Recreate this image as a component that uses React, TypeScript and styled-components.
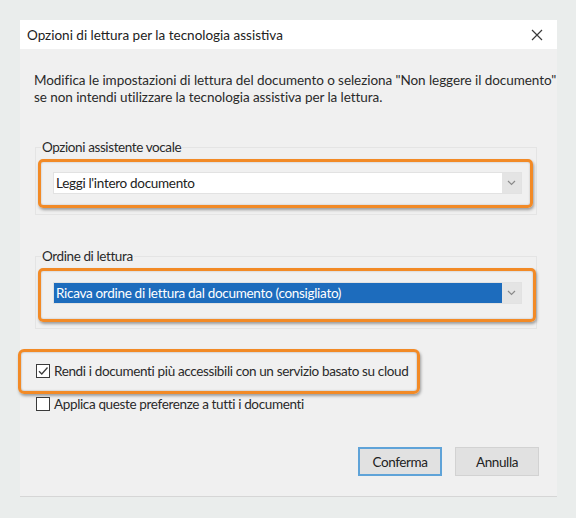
import styled, { createGlobalStyle } from 'styled-components'

const GlobalStyle = createGlobalStyle`
  body {
    margin: 0;
    background: #eaedec;
    font-family: Lato, 'Liberation Sans', sans-serif;
    color: #2b2b2b;
  }
`

const CloseIcon = () => (
  <svg width="12" height="12" viewBox="0 0 12 12">
    <path d="M1 1 L11 11 M11 1 L1 11" stroke="#3a3a3a" strokeWidth="1.2" fill="none" />
  </svg>
)

const Chevron = () => (
  <svg width="9" height="6" viewBox="0 0 9 6">
    <path d="M1 1 L4.5 4.5 L8 1" stroke="#8a8a8a" strokeWidth="1.2" fill="none" />
  </svg>
)

const Tick = () => (
  <svg width="12" height="12" viewBox="0 0 12 12">
    <path d="M2 6.2 L4.8 9 L10.5 2.5" stroke="#3c3c3c" strokeWidth="1.3" fill="none" />
  </svg>
)

type SelectProps = { value: string; selected?: boolean }

const Select = ({ value, selected }: SelectProps) => (
  <SelectBox>
    <SelectValue $selected={selected}>{value}</SelectValue>
    <ArrowBox>
      <Chevron />
    </ArrowBox>
  </SelectBox>
)

type CheckProps = { label: string; checked?: boolean }

const CheckRow = ({ label, checked }: CheckProps) => (
  <CheckLine>
    <CheckBox>{checked && <Tick />}</CheckBox>
    <span>{label}</span>
  </CheckLine>
)

const App = () => {
  return (
    <Page>
      <GlobalStyle />
      <Dialog>
        <TitleBar>
          <Title>Opzioni di lettura per la tecnologia assistiva</Title>
          <CloseButton>
            <CloseIcon />
          </CloseButton>
        </TitleBar>
        <Body>
          <Intro>
            Modifica le impostazioni di lettura del documento o seleziona "Non leggere il documento"
            <br />
            se non intendi utilizzare la tecnologia assistiva per la lettura.
          </Intro>

          <Group>
            <GroupLabel>Opzioni assistente vocale</GroupLabel>
            <Highlight $top={10} $bottom={11} $right={6}>
              <Select value="Leggi l'intero documento" />
            </Highlight>
          </Group>

          <Group>
            <GroupLabel>Ordine di lettura</GroupLabel>
            <Highlight $top={11} $bottom={15} $right={9}>
              <Select value="Ricava ordine di lettura dal documento (consigliato)" selected />
            </Highlight>
          </Group>

          <CheckHighlight>
            <CheckRow label="Rendi i documenti più accessibili con un servizio basato su cloud" checked />
          </CheckHighlight>
          <PlainCheck>
            <CheckRow label="Applica queste preferenze a tutti i documenti" />
          </PlainCheck>

          <Buttons>
            <Button $primary>Conferma</Button>
            <Button>Annulla</Button>
          </Buttons>
        </Body>
      </Dialog>
    </Page>
  )
}

const Page = styled.div`
  padding: 20px 19px 20px 20px;
`

const Dialog = styled.div`
  width: 537px;
  background: #f0f0f0;
  border-bottom: 1px solid #d6d6d6;
`

const TitleBar = styled.div`
  height: 29px;
  background: #fff;
  display: flex;
  align-items: center;
  justify-content: space-between;
  padding: 0 14px 0 7px;
`

const Title = styled.div`
  font-size: 13.5px;
  color: #222;
`

const CloseButton = styled.div`
  display: flex;
  align-items: center;
`

const Body = styled.div`
  padding: 23px 18px 20px 14px;
`

const Intro = styled.p`
  margin: 0;
  font-size: 13.5px;
  line-height: 17px;
  letter-spacing: -0.06px;
  color: #2a2a2a;
  white-space: nowrap;
`

const Group = styled.fieldset`
  margin: 33px 0 0 1px;
  padding: 0 0 6px 2px;
  border: 1px solid #e4e4e4;
  width: 502px;
  box-sizing: border-box;
`

const GroupLabel = styled.legend`
  margin-left: 3px;
  padding: 0 1px;
  font-size: 13.5px;
  line-height: 16px;
  letter-spacing: -0.4px;
  color: #2a2a2a;
`

const Highlight = styled.div<{ $top: number; $bottom: number; $right: number }>`
  margin-top: 4px;
  margin-right: ${(p) => 9 - p.$right}px;
  border: 3px solid #f28a26;
  border-radius: 5px;
  padding: ${(p) => p.$top}px ${(p) => p.$right + 2}px ${(p) => p.$bottom}px 12px;
  box-shadow: 1px 2px 3px rgba(0, 0, 0, 0.35), inset 0 0 2px rgba(0, 0, 0, 0.25);
`

const SelectBox = styled.div`
  display: flex;
  height: 20px;
  background: #fff;
  border: 1px solid #e2e2e2;
`

const SelectValue = styled.div<{ $selected?: boolean }>`
  flex: 1;
  display: flex;
  align-items: center;
  padding-left: 2px;
  font-size: 13.5px;
  letter-spacing: -0.3px;
  background: ${(p) => (p.$selected ? '#1d6cbd' : '#fff')};
  color: ${(p) => (p.$selected ? '#fff' : '#222')};
`

const ArrowBox = styled.div`
  width: 19px;
  display: flex;
  align-items: center;
  justify-content: center;
  background: #e4e4e4;
`

const CheckHighlight = styled.div`
  display: inline-flex;
  margin: 20px 0 0 -16px;
  border: 3px solid #f28a26;
  border-radius: 6px;
  padding: 11px 9px 12px 15px;
  box-shadow: 1px 2px 3px rgba(0, 0, 0, 0.35), inset 0 0 2px rgba(0, 0, 0, 0.35);
`

const PlainCheck = styled.div`
  margin: 2px 0 0 2px;
`

const CheckLine = styled.label`
  display: flex;
  align-items: center;
  gap: 4px;
  font-size: 13.5px;
  line-height: 16px;
  letter-spacing: -0.36px;
  color: #2a2a2a;
`

const CheckBox = styled.span`
  width: 12px;
  height: 12px;
  border: 1px solid #3a3a3a;
  background: #fff;
  display: flex;
  align-items: center;
  justify-content: center;
`

const Buttons = styled.div`
  display: flex;
  justify-content: flex-end;
  gap: 13px;
  margin-top: 35px;
`

const Button = styled.button<{ $primary?: boolean }>`
  width: 84px;
  height: 29px;
  font-family: inherit;
  font-size: 13.5px;
  letter-spacing: -0.4px;
  color: #222;
  background: #e1e1e1;
  border: ${(p) => (p.$primary ? '2px solid #5fa3d8' : '1px solid #d2d2d2')};
  padding: 0;
`

export default App
